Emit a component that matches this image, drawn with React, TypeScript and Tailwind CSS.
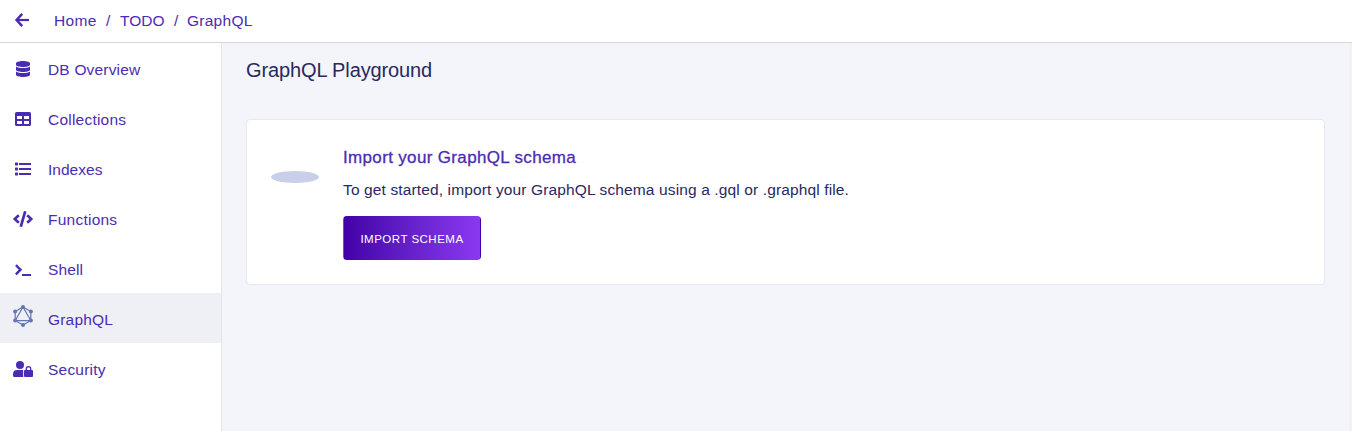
import React from "react";
import { FaCode, FaDatabase } from "react-icons/fa";

function ArrowIcon() {
  return (
    <svg width="16" height="16" viewBox="0 0 16 16" fill="none" stroke="currentColor" strokeWidth="2.5">
      <path d="M8.2 1.9 2.6 8l5.6 6.1" />
      <path d="M2.8 8H15" strokeWidth="2.2" />
    </svg>
  );
}

function TableIcon() {
  return (
    <svg width="16" height="16" viewBox="0 0 16 16" fill="currentColor">
      <path
        fillRule="evenodd"
        d="M1.5 1H14.5Q16 1 16 2.5V13.5Q16 15 14.5 15H1.5Q0 15 0 13.5V2.5Q0 1 1.5 1ZM2 5V8H7V5ZM9 5V8H14V5ZM2 10V13H7V10ZM9 10V13H14V10Z"
      />
    </svg>
  );
}

function ListIcon() {
  return (
    <svg width="16" height="16" viewBox="0 0 16 16" fill="currentColor">
      <rect x="0" y="1.5" width="3" height="3" rx="0.4" />
      <rect x="0" y="6.5" width="3" height="3" rx="0.4" />
      <rect x="0" y="11.5" width="3" height="3" rx="0.4" />
      <path d="M4 2H16V4H4ZM4 7H16V9H4ZM4 12H16V14H4Z" />
    </svg>
  );
}

function ShellIcon() {
  return (
    <svg width="16" height="16" viewBox="0 0 16 16" fill="none" stroke="currentColor" strokeWidth="2.4">
      <path d="M0.9 4.1 5.5 8.7 0.9 13.3" />
      <path d="M7 14H16" strokeWidth="2" />
    </svg>
  );
}

function SecurityIcon() {
  return (
    <svg width="20" height="16" viewBox="0 0 20 16" fill="currentColor">
      <circle cx="7" cy="4" r="4" />
      <path d="M4.2 9H9.8Q10.2 9 10.2 9.6V15.4L10.5 16H1.5Q0 16 0 14.5V13.2Q0 9 4.2 9Z" />
      <rect x="11" y="9" width="9" height="7" rx="1" />
      <path d="M13.3 9.6V7.8a2.2 2.2 0 0 1 4.4 0V9.6" fill="none" stroke="currentColor" strokeWidth="1.3" />
    </svg>
  );
}

function GraphqlIcon() {
  return (
    <svg width="20" height="22" viewBox="0 0 20 22" className="mb-[6px]" fill="none" stroke="#6377b4" strokeWidth="1.25">
      <path d="M10 2 17.8 6.5V15.5L10 20 2.2 15.5V6.5Z" />
      <path d="M10 2 17.8 15.5H2.2Z" />
      <g fill="#6377b4" stroke="none">
        <circle cx="10" cy="2.1" r="2" />
        <circle cx="17.9" cy="6.5" r="2" />
        <circle cx="17.9" cy="15.4" r="2" />
        <circle cx="10" cy="19.9" r="2" />
        <circle cx="2.1" cy="15.4" r="2" />
        <circle cx="2.1" cy="6.5" r="2" />
      </g>
    </svg>
  );
}

const items = [
  { label: "DB Overview", icon: <FaDatabase size={16} />, tracking: "tracking-[0.18px]" },
  { label: "Collections", icon: <TableIcon />, tracking: "tracking-[0.22px]" },
  { label: "Indexes", icon: <ListIcon />, tracking: "tracking-[0.02px]" },
  { label: "Functions", icon: <FaCode size={20} />, tracking: "tracking-[0.24px]" },
  { label: "Shell", icon: <ShellIcon />, tracking: "tracking-[0.12px]" },
  { label: "GraphQL", icon: <GraphqlIcon />, tracking: "tracking-[0.2px]", active: true },
  { label: "Security", icon: <SecurityIcon />, tracking: "tracking-[0.22px]" },
];

export default function App() {
  return (
    <div className="flex h-[431px] w-full flex-col overflow-hidden bg-white font-['Liberation_Sans',sans-serif] text-[15.5px] text-[#4a2cb3]">
      <header className="flex h-[43px] shrink-0 items-center border-b border-[#d5d5e6] pb-0.5 pl-[14px]">
        <ArrowIcon />
        <nav className="flex items-center pl-[24px] pt-px leading-5">
          <span className="w-[52px] tracking-[0.3px]">Home</span>
          <span className="w-[13px]">/</span>
          <span className="w-[55px] pl-px">TODO</span>
          <span className="w-[13px]">/</span>
          <span className="tracking-[0.26px]">GraphQL</span>
        </nav>
      </header>
      <div className="flex min-h-0 flex-1">
        <aside className="flex w-[222px] shrink-0 flex-col border-r border-[#e4e4ec]">
          {items.map((item) => (
            <a
              key={item.label}
              className={`flex h-[50px] shrink-0 items-center ${item.active ? "bg-[#eff0f6]" : ""}`}
            >
              <span className="flex w-[46px] justify-center pt-0.5">{item.icon}</span>
              <span className={`pl-[2px] pt-1 leading-5 ${item.tracking}`}>{item.label}</span>
            </a>
          ))}
        </aside>
        <main className="min-w-0 flex-1 bg-[#f4f5fa] pl-6 pr-6 pt-[14px]">
          <h1 className="text-[20px] leading-[26px] tracking-[-0.12px] text-[#27295f]">GraphQL Playground</h1>
          <section className="mt-9 flex h-[166px] rounded border border-[#e7e8ee] bg-white pl-6 pt-6">
            <div className="mt-[27px] h-3 w-12 rounded-[50%] bg-[#c9cfe8]" />
            <div className="pl-6">
              <h2 className="text-[17px] leading-7 tracking-[0.34px] [-webkit-text-stroke:0.3px]">Import your GraphQL schema</h2>
              <p className="mt-[8px] text-[15.5px] leading-5 tracking-[0.13px] text-[#27295f]">
                To get started, import your GraphQL schema using a .gql or .graphql file.
              </p>
              <button className="mt-[16px] h-11 w-[138px] rounded border border-transparent bg-linear-to-r from-[#4400a8] to-[#8a38f0] pt-[3px] text-[11.5px] tracking-[0.5px] text-white">
                IMPORT SCHEMA
              </button>
            </div>
          </section>
        </main>
        <div className="w-[3px] shrink-0 bg-[#f1f1f1]" />
      </div>
    </div>
  );
}
